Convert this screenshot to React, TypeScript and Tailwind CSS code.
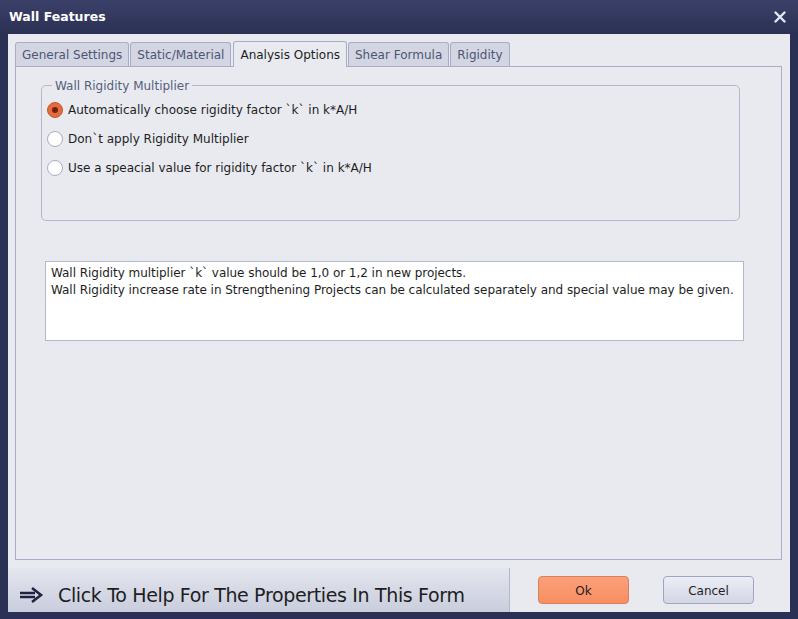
import React from 'react';

const font = { fontFamily: 'Tahoma, "DejaVu Sans", sans-serif' };

const tabs = ['General Settings', 'Static/Material', 'Analysis Options', 'Shear Formula', 'Rigidity'];

const Radio = ({ checked, label }: { checked?: boolean; label: string }) => (
  <div className="flex items-center h-[29px]">
    {checked ? (
      <span className="w-[16px] h-[16px] rounded-full bg-[#e8693f] border border-[#c4552f] flex items-center justify-center">
        <span className="w-[6px] h-[6px] rounded-full bg-[#6b2412]" />
      </span>
    ) : (
      <span className="w-[16px] h-[16px] rounded-full bg-white border border-[#a8adc4]" />
    )}
    <span className="ml-[5px] text-[12px] text-[#1e1e1e]">{label}</span>
  </div>
);

export default function App() {
  return (
    <div className="w-[798px] h-[619px] bg-[#2b3154] flex flex-col" style={font}>
      {/* title bar */}
      <div className="h-[34px] flex items-center justify-between pl-[9px] pr-[12px] bg-gradient-to-b from-[#3a4068] to-[#2b3154]">
        <span className="text-white font-bold text-[12.5px] mt-[1px]">Wall Features</span>
        <svg width="12" height="12" viewBox="0 0 12 12">
          <path d="M1.5 1.5 L10.5 10.5 M10.5 1.5 L1.5 10.5" stroke="#e6e8f0" strokeWidth="2.4" strokeLinecap="round" />
        </svg>
      </div>

      <div className="flex-1 mx-[8px] mb-[7px] bg-[#e8eaf0] flex flex-col">
        <div className="pl-[7px] pr-[8px] pt-[6px]">
          {/* tab strip */}
          <div className="flex items-end h-[26px]">
            {tabs.map((t) => {
              const active = t === 'Analysis Options';
              return active ? (
                <div
                  key={t}
                  className="h-[26px] px-[6px] mx-[1px] rounded-t-[3px] border border-b-0 border-[#a8adc6] bg-[#e8eaf0] text-[12px] text-[#1e1e1e] flex items-center relative z-10 -mb-px"
                >
                  {t}
                </div>
              ) : (
                <div
                  key={t}
                  className="h-[24px] px-[6px] mr-[1px] rounded-t-[3px] border border-b-0 border-[#a8adc6] bg-[#d3d6e2] text-[12px] text-[#4d5576] flex items-center"
                >
                  {t}
                </div>
              );
            })}
          </div>
          {/* tab page */}
          <div className="h-[494px] border border-[#a8adc6] pt-[18px] pl-[25px] pr-[41px]">
            <div className="relative h-[136px] border border-[#b4b8cc] rounded-[5px] pt-[9px] pl-[5px]">
              <span className="absolute -top-[9px] left-[10px] px-[3px] bg-[#e8eaf0] text-[12px] text-[#565e7d]">
                Wall Rigidity Multiplier
              </span>
              <Radio checked label="Automatically choose rigidity factor `k` in k*A/H" />
              <Radio label="Don`t apply Rigidity Multiplier" />
              <Radio label="Use a speacial value for rigidity factor `k` in k*A/H" />
            </div>
            <div className="mt-[40px] ml-[4px] mr-[-4px] h-[80px] bg-white border border-[#b4b8cc] px-[5px] pt-[3px] text-[12px] leading-[17px] text-[#1e1e1e] whitespace-nowrap tracking-[-0.04px] overflow-hidden">
              <div>Wall Rigidity multiplier `k` value should be 1,0 or 1,2 in new projects.</div>
              <div>Wall Rigidity increase rate in Strengthening Projects can be calculated separately and special value may be given.</div>
            </div>
          </div>
        </div>

        {/* bottom bar */}
        <div className="flex-1 flex items-end">
          <div className="w-[502px] h-[44px] bg-gradient-to-b from-[#e4e6ee] to-[#c9cddd] border-r border-[#b4b8cc] flex items-center pl-[10px] pt-[10px]">
            <svg width="27" height="18" viewBox="0 0 27 18">
              <path d="M2 7 H17 M2 11 H17" stroke="#1f2340" strokeWidth="2.4" />
              <path d="M14 2 L23 9 L14 16" fill="none" stroke="#1f2340" strokeWidth="2.6" strokeLinejoin="miter" />
            </svg>
            <span className="ml-[13px] text-[19px] tracking-[-0.35px] text-[#1e1e1e]">
              Click To Help For The Properties In This Form
            </span>
          </div>
          <div className="flex-1 h-[44px] flex items-center pl-[28px] gap-[34px]">
            <button className="w-[91px] h-[28px] rounded-[4px] border border-[#d98158] bg-gradient-to-b from-[#fba07a] to-[#f88e63] text-[12px] text-[#1e1e1e] pt-[2px]">
              Ok
            </button>
            <button className="w-[91px] h-[28px] rounded-[4px] border border-[#a0a6c2] bg-gradient-to-b from-[#eceef5] to-[#d3d6e4] text-[12px] text-[#1e1e1e] pt-[2px]">
              Cancel
            </button>
          </div>
        </div>
      </div>
    </div>
  );
}
